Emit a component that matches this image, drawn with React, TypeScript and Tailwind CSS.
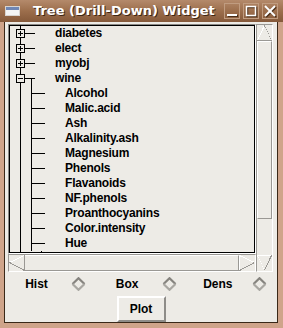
import React from 'react';

const leaves = ['Alcohol', 'Malic.acid', 'Ash', 'Alkalinity.ash', 'Magnesium', 'Phenols', 'Flavanoids', 'NF.phenols', 'Proanthocyanins', 'Color.intensity', 'Hue'];
const datasets = ['diabetes', 'elect', 'myobj'];

const Expander = ({ open }: { open: boolean }) => (
    <svg width="45" height="15" shapeRendering="crispEdges" className="shrink-0">
        <line x1="10.5" y1="0" x2="10.5" y2="15" stroke="#000" />
        <line x1="15" y1="7.5" x2="25" y2="7.5" stroke="#000" />
        {open && <line x1="21.5" y1="7.5" x2="21.5" y2="15" stroke="#000" />}
        <rect x="6.5" y="3.5" width="8" height="8" fill="#edebe6" stroke="#000" />
        <line x1="8" y1="7.5" x2="13" y2="7.5" stroke="#000" />
        {!open && <line x1="10.5" y1="5" x2="10.5" y2="10" stroke="#000" />}
    </svg>
);

const Leaf = () => (
    <svg width="55" height="15" shapeRendering="crispEdges" className="shrink-0">
        <line x1="10.5" y1="0" x2="10.5" y2="15" stroke="#000" />
        <line x1="21.5" y1="0" x2="21.5" y2="15" stroke="#000" />
        <line x1="21" y1="7.5" x2="35" y2="7.5" stroke="#000" />
    </svg>
);

const G = '#9a9894';

const UpArrow = () => (
    <svg width="15" height="16" shapeRendering="crispEdges" className="block">
        <line x1="0.5" y1="15" x2="7.5" y2="0.5" stroke="#fff" />
        <line x1="7.5" y1="0.5" x2="14.5" y2="15" stroke={G} strokeDasharray="1 1" />
        <line x1="0" y1="15.5" x2="15" y2="15.5" stroke={G} />
    </svg>
);

const DownArrow = () => (
    <svg width="15" height="16" shapeRendering="crispEdges" className="block">
        <line x1="0" y1="0.5" x2="15" y2="0.5" stroke="#fff" />
        <line x1="0.5" y1="0.5" x2="7.5" y2="15" stroke="#fff" strokeDasharray="1 1" />
        <line x1="14.5" y1="0.5" x2="7.5" y2="15" stroke={G} />
    </svg>
);

const LeftArrow = () => (
    <svg width="16" height="16" shapeRendering="crispEdges" className="block shrink-0">
        <line x1="0.5" y1="7.5" x2="15.5" y2="0.5" stroke="#fff" />
        <line x1="0.5" y1="7.5" x2="15.5" y2="15.5" stroke={G} />
        <line x1="15.5" y1="0" x2="15.5" y2="16" stroke={G} />
    </svg>
);

const RightArrow = () => (
    <svg width="16" height="16" shapeRendering="crispEdges" className="block shrink-0">
        <line x1="0.5" y1="0" x2="0.5" y2="16" stroke="#fff" />
        <line x1="0.5" y1="0.5" x2="15.5" y2="7.5" stroke="#fff" />
        <line x1="0.5" y1="15.5" x2="15.5" y2="7.5" stroke={G} />
    </svg>
);

const Diamond = () => (
    <svg width="15" height="14" className="shrink-0">
        <polyline points="1.5,7 7.5,1.2 13.5,7" fill="none" stroke="#86847f" strokeWidth="2.2" />
        <polyline points="1.5,7 7.5,12.8 13.5,7" fill="none" stroke="#a9a7a2" strokeWidth="2.2" />
    </svg>
);

const TitleButton = ({ kind }: { kind: 'min' | 'max' | 'close' }) => (
    <div className="w-[16px] h-[16px] border border-[#c09c80] flex items-center justify-center">
        <svg width="12" height="12" className="[filter:drop-shadow(1px_1px_0_#4a2e18)]">
            {kind === 'min' && <rect x="1" y="9" width="10" height="2" fill="#fff" />}
            {kind === 'max' && <rect x="1.5" y="1.5" width="9" height="9" fill="none" stroke="#fff" strokeWidth="1.5" />}
            {kind === 'close' && (
                <g stroke="#fff" strokeWidth="2">
                    <line x1="1" y1="1" x2="11" y2="11" />
                    <line x1="11" y1="1" x2="1" y2="11" />
                </g>
            )}
        </svg>
    </div>
);

const App: React.FC = () => {
    return (
        <div className="w-[283px] h-[328px] bg-[#cfa48a] flex flex-col overflow-hidden font-['Liberation_Sans',Arial,sans-serif]">
            {/* title bar */}
            <div className="h-[22px] shrink-0 flex items-center bg-linear-to-b from-[#b48a6b] via-[#9c6e4c] to-[#85593a]">
                <div className="ml-[5px] w-[15px] h-[10px] border border-[#d8d4d0] bg-[#f4f4f4] flex flex-col">
                    <div className="h-[3px] bg-[#6f86b4]" />
                </div>
                <span className="ml-[13px] text-white font-bold text-[13px] font-['DejaVu_Sans',sans-serif] [text-shadow:1px_1px_0_#3e2614]">
                    Tree (Drill-Down) Widget
                </span>
                <div className="ml-auto mr-[5px] flex gap-[3px]">
                    <TitleButton kind="min" />
                    <TitleButton kind="max" />
                    <TitleButton kind="close" />
                </div>
            </div>

            {/* client area */}
            <div className="ml-[4px] mr-[5px] mb-[5px] flex-1 border-l border-r border-b border-[#3a2818] bg-[#edebe6] flex flex-col text-black">
                <div className="pt-[2px] pl-[3px] grid grid-cols-[248px_17px] grid-rows-[230px_18px]">
                    {/* tree */}
                    <div className="border border-t-[#8a8884] border-l-[#8a8884] border-b-white border-r-white">
                        <div className="h-full border border-black overflow-hidden">
                            {datasets.map(d => (
                                <div key={d} className="flex h-[15px] items-center">
                                    <Expander open={false} />
                                    <span className="text-[12px] font-bold leading-[15px] tracking-[-0.2px]">{d}</span>
                                </div>
                            ))}
                            <div className="flex h-[15px] items-center">
                                <Expander open={true} />
                                <span className="text-[12px] font-bold leading-[15px] tracking-[-0.2px]">wine</span>
                            </div>
                            {leaves.map(l => (
                                <div key={l} className="flex h-[15px] items-center">
                                    <Leaf />
                                    <span className="text-[12px] font-bold leading-[15px] tracking-[-0.2px] whitespace-nowrap">{l}</span>
                                </div>
                            ))}
                            <div className="h-[2px] w-[22px] border-l border-r border-black ml-[10px]" />
                        </div>
                    </div>

                    {/* vertical scrollbar */}
                    <div className="row-span-2 border border-t-[#9a9894] border-l-[#9a9894] border-b-white border-r-white flex flex-col">
                        <UpArrow />
                        <div className="h-[178px] border-l border-t border-l-white border-t-white border-r border-b border-r-[#9a9894] border-b-[#9a9894]" />
                        <div className="flex-1" />
                        <DownArrow />
                    </div>

                    {/* horizontal scrollbar */}
                    <div className="border border-t-[#9a9894] border-l-[#9a9894] border-b-white border-r-white flex">
                        <LeftArrow />
                        <div className="flex-1 border-t border-t-white border-b border-r border-b-[#9a9894] border-r-[#9a9894]" />
                        <RightArrow />
                    </div>
                </div>

                {/* radio row */}
                <div className="h-[24px] grid grid-cols-3 items-center text-[12px] font-bold">
                    {['Hist', 'Box', 'Dens'].map(t => (
                        <div key={t} className="flex items-center">
                            <span className="w-[63px] text-center">{t}</span>
                            <span className="ml-[3px] flex"><Diamond /></span>
                        </div>
                    ))}
                </div>

                {/* plot button */}
                <div className="flex justify-center">
                    <button className="w-[49px] h-[26px] border-2 border-t-white border-l-white border-b-[#8e8c88] border-r-[#8e8c88] text-[12px] font-bold bg-[#edebe6]">
                        Plot
                    </button>
                </div>
            </div>
        </div>
    );
};

export default App;
